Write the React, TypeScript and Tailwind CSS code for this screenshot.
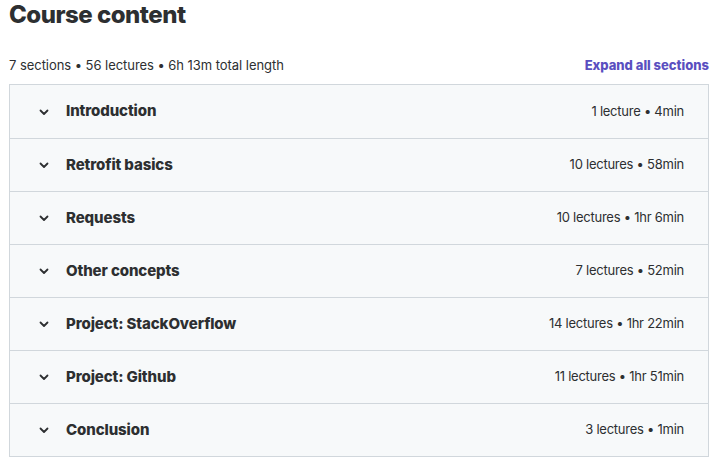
const sections = [
  { title: 'Introduction', meta: '1 lecture • 4min' },
  { title: 'Retrofit basics', meta: '10 lectures • 58min' },
  { title: 'Requests', meta: '10 lectures • 1hr 6min' },
  { title: 'Other concepts', meta: '7 lectures • 52min' },
  { title: 'Project: StackOverflow', meta: '14 lectures • 1hr 22min' },
  { title: 'Project: Github', meta: '11 lectures • 1hr 51min' },
  { title: 'Conclusion', meta: '3 lectures • 1min' },
]

function Chevron() {
  return (
    <svg width="12" height="12" viewBox="0 0 12 12" fill="none" className="flex-shrink-0">
      <path d="M2.5 4.5 6 8l3.5-3.5" stroke="#2d2f31" strokeWidth="1.8" strokeLinecap="round" strokeLinejoin="round" />
    </svg>
  )
}

export default function App() {
  return (
    <div className="w-[717px] h-[460px] bg-white overflow-hidden pl-[9px] pr-[8px] text-[#2d2f31]" style={{ fontFamily: 'Inter, "Noto Sans", sans-serif' }}>
      <h2 className="text-[24px] font-extrabold leading-[30px] tracking-[-0.5px]">Course content</h2>

      <div className="flex items-center justify-between mt-[26px] mb-[8px] h-[20px]">
        <span className="text-[13px] tracking-[-0.05px]">7 sections • 56 lectures • 6h 13m total length</span>
        <button className="text-[13px] font-extrabold text-[#5a4fc0]">Expand all sections</button>
      </div>

      <div className="w-[700px] border border-[#d1d7dc]">
        {sections.map((s, i) => (
          <div
            key={s.title}
            className={`flex items-center h-[53px] bg-[#f7f9fa] pl-[28px] pr-[24px] ${i > 0 ? 'border-t border-[#d1d7dc]' : ''}`}
          >
            <Chevron />
            <span className="ml-[16px] flex-1 text-[15px] font-extrabold tracking-[-0.1px]">{s.title}</span>
            <span className="text-[13px] tracking-[-0.25px]">{s.meta}</span>
          </div>
        ))}
      </div>
    </div>
  )
}
